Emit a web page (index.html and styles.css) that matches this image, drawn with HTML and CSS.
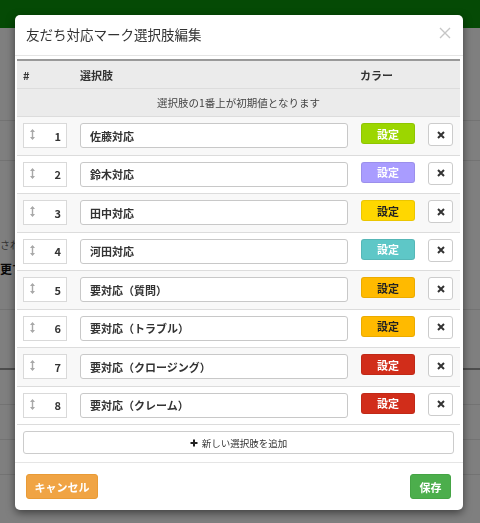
FILE: index.html
```html
<!DOCTYPE html>
<html>
<head>
    <title>友だち対応マーク選択肢編集</title>
    <meta name="viewport" content="width=device-width, initial-scale=1.0">
    <link rel="stylesheet" href="styles.css">
</head>
<body>
    <!-- page behind the dialog -->
    <div class="page">
        <div class="topbar"></div>
        <div class="bg-row" style="height: 93px"></div>
        <div class="bg-row" style="height: 40px"></div>
        <div class="bg-row bg-text" style="height: 149px">
            <p class="bg-note">されます</p>
            <p class="bg-strong">更する</p>
        </div>
        <div class="bg-row dark" style="height: 60px"></div>
        <div class="bg-row" style="height: 35px"></div>
        <div class="bg-row" style="height: 35px"></div>
        <div class="bg-row" style="height: 35px"></div>
    </div>
    <div class="backdrop"></div>

    <!-- dialog -->
    <div class="modal">
        <div class="modal-header">
            <h4 class="modal-title">友だち対応マーク選択肢編集</h4>
            <button class="close">
                <svg width="12" height="12" viewBox="0 0 12 12"><path d="M1 1L11 11M11 1L1 11" stroke="#c6c6c6" stroke-width="1.4" fill="none"/></svg>
            </button>
        </div>

        <div class="modal-body">
            <div class="choice-table">
                <div class="head-row">
                    <div class="cell">#</div>
                    <div class="cell">選択肢</div>
                    <div class="cell">カラー</div>
                    <div class="cell"></div>
                </div>
                <div class="note-row">選択肢の1番上が初期値となります</div>
                <div id="rows"></div>
            </div>
            <button class="add-btn">
                <svg width="8" height="8" viewBox="0 0 8 8"><path d="M4 0.5V7.5M0.5 4H7.5" stroke="#222" stroke-width="2" fill="none"/></svg>
                新しい選択肢を追加
            </button>
        </div>

        <div class="modal-footer">
            <button class="btn btn-cancel">キャンセル</button>
            <button class="btn btn-save">保存</button>
        </div>
    </div>

    <script>
        // choices shown in the dialog
        const choices = [
            { name: "佐藤対応", color: "green" },
            { name: "鈴木対応", color: "purple" },
            { name: "田中対応", color: "yellow" },
            { name: "河田対応", color: "teal" },
            { name: "要対応（質問）", color: "orange" },
            { name: "要対応（トラブル）", color: "orange" },
            { name: "要対応（クロージング）", color: "red" },
            { name: "要対応（クレーム）", color: "red" }
        ];

        var rows = document.getElementById('rows');

        choices.forEach(function (choice, i) {
            const row = document.createElement("div");
            row.className = "choice-row";
            row.innerHTML =
                '<div class="cell"><div class="handle">' +
                    '<svg width="5" height="11" viewBox="0 0 5 11"><path d="M2.5 1V10" stroke="#a8a8a8" stroke-width="1.4"/><path d="M0 3L2.5 0L5 3Z M0 8L2.5 11L5 8Z" fill="#a8a8a8"/></svg>' +
                    '<span class="num">' + (i + 1) + '</span>' +
                '</div></div>' +
                '<div class="cell"><input class="name-input" type="text" value="' + choice.name + '"></div>' +
                '<div class="cell"><button class="color-btn ' + choice.color + '">設定</button></div>' +
                '<div class="cell"><button class="del-btn">' +
                    '<svg width="8" height="8" viewBox="0 0 8 8"><path d="M1 1L7 7M7 1L1 7" stroke="#333" stroke-width="2"/></svg>' +
                '</button></div>';
            rows.appendChild(row);
        });
    </script>
</body>
</html>
```

FILE: styles.css
```css
body {
    margin: 0;
    width: 480px;
    height: 523px;
    overflow: hidden;
    position: relative;
    font-family: "Noto Sans CJK JP", "Noto Sans", sans-serif;
    color: #333;
    background-color: #fff;
}

button {
    font-family: inherit;
    cursor: pointer;
}

/* background page */
.topbar {
    height: 28px;
    background-color: #0a940a;
}

.bg-row {
    border-bottom: 1px solid #e6e6e6;
    box-sizing: border-box;
}

.bg-row.dark {
    border-bottom: 2px solid #9a9a9a;
}

.bg-text {
    padding-top: 76px;
}

.bg-note {
    margin: 0;
    font-size: 10px;
    color: #666;
}

.bg-strong {
    margin: 8px 0 0;
    font-size: 12px;
    font-weight: bold;
    color: #111;
}

.backdrop {
    position: fixed;
    top: 0;
    left: 0;
    right: 0;
    bottom: 0;
    background-color: rgba(0, 0, 0, 0.5);
}

/* dialog */
.modal {
    position: absolute;
    top: 15px;
    left: 15px;
    width: 448px;
    background-color: #fff;
    border-radius: 5px;
    box-shadow: 0 3px 9px rgba(0, 0, 0, 0.5);
}

.modal-header {
    height: 40px;
    border-bottom: 1px solid #e5e5e5;
    padding: 0 12px 0 11px;
    display: flex;
    align-items: center;
    justify-content: space-between;
}

.modal-title {
    margin: 0;
    font-size: 13.5px;
    font-weight: normal;
    color: #333;
    margin-top: -2px;
}

.close {
    border: none;
    background: none;
    padding: 0;
    display: flex;
    margin-top: -4px;
}

.modal-body {
    padding: 3px 3px 8px 2px;
}

.choice-table {
    border-top: 2px solid #999;
}

.head-row,
.choice-row {
    display: grid;
    grid-template-columns: 57px 280px 67px 39px;
}

.cell {
    padding: 0 6px;
}

.choice-row .cell {
    display: flex;
    align-items: flex-start;
}

.head-row {
    height: 27px;
    align-items: center;
    background-color: #ebebeb;
    border-bottom: 1px solid #dcdcdc;
    font-size: 11px;
    font-weight: bold;
}

.note-row {
    height: 27px;
    line-height: 27px;
    text-align: center;
    background-color: #ebebeb;
    border-bottom: 1px solid #dcdcdc;
    font-size: 10.5px;
    color: #444;
}

.choice-row {
    height: 38.5px;
    box-sizing: border-box;
    padding-top: 6px;
    align-items: start;
    border-bottom: 1px solid #dcdcdc;
    background-color: #fff;
}

.choice-row:nth-child(odd) {
    background-color: #f8f8f8;
}

.handle {
    width: 44px;
    height: 25px;
    box-sizing: border-box;
    border: 1px solid #d9d9d9;
    background-color: #fff;
    display: flex;
    align-items: center;
    justify-content: space-between;
    padding: 0 5px 0 6px;
}

.handle svg {
    margin-top: -2px;
}

.num {
    font-size: 11px;
    font-weight: bold;
    color: #333;
    line-height: 1;
    margin-top: 1px;
}

.name-input {
    width: 100%;
    height: 25px;
    box-sizing: border-box;
    border: 1px solid #c8c8c8;
    border-radius: 3px;
    padding: 0 9px;
    font-family: inherit;
    font-size: 11px;
    font-weight: bold;
    color: #333;
    background-color: #fff;
}

.color-btn {
    width: 54px;
    height: 21px;
    margin-left: 1px;
    border: 1px solid rgba(0, 0, 0, 0.08);
    border-radius: 3px;
    font-size: 11px;
    font-weight: bold;
    color: #fff;
    padding: 0;
}

.color-btn.green { background-color: #9cd600; }
.color-btn.purple { background-color: #a99cff; }
.color-btn.yellow { background-color: #ffd700; color: #222; }
.color-btn.teal { background-color: #5ec7c7; }
.color-btn.orange { background-color: #ffba00; color: #222; }
.color-btn.red { background-color: #d12d1a; }

.del-btn {
    width: 25px;
    height: 23px;
    margin-left: 1px;
    box-sizing: border-box;
    border: 1px solid #ccc;
    border-radius: 3px;
    background-color: #fff;
    display: flex;
    align-items: center;
    justify-content: center;
    padding: 0;
}

.add-btn {
    display: flex;
    align-items: center;
    justify-content: center;
    gap: 4px;
    width: 431px;
    height: 23px;
    margin: 6px 0 0 6px;
    border: 1px solid #ccc;
    border-radius: 3px;
    background-color: #fff;
    font-size: 9.5px;
    color: #333;
    padding: 0;
}

.modal-footer {
    border-top: 1px solid #e5e5e5;
    padding: 11px 12px 11px 11px;
    display: flex;
    justify-content: space-between;
}

.btn {
    height: 25px;
    border-radius: 3px;
    font-size: 11px;
    font-weight: bold;
    color: #fff;
    padding: 0;
}

.btn-cancel {
    width: 72px;
    background-color: #f0a444;
    border: 1px solid #e99b36;
}

.btn-save {
    width: 41px;
    background-color: #4cae4c;
    border: 1px solid #45a445;
}
```
